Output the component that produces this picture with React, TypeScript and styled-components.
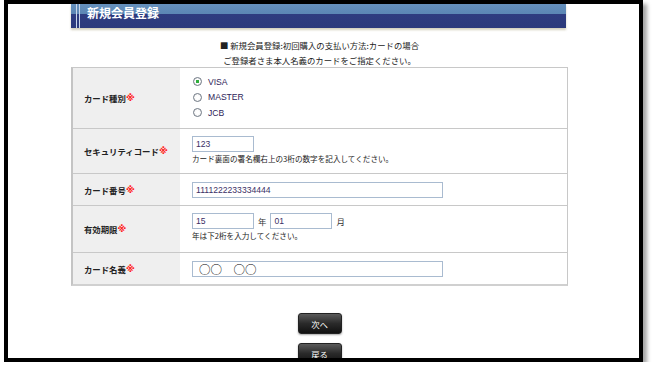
import React from 'react';
import styled, { createGlobalStyle } from 'styled-components';

const GlobalStyle = createGlobalStyle`
  body {
    margin: 0;
    background: #ffffff;
    font-family: "Noto Sans CJK JP", "Liberation Sans", sans-serif;
    color: #333333;
  }
`;

const Frame = styled.div`
  box-sizing: border-box;
  margin-left: 4px;
  width: 639px;
  height: 362px;
  border: 4px solid #000000;
  background: #ffffff;
  box-shadow: 4px 4px 4px rgba(0, 0, 0, 0.35);
  overflow: hidden;
`;

const Column = styled.div`
  margin-left: 63px;
  width: 497px;
  display: flex;
  flex-direction: column;
`;

const Header = styled.div`
  position: relative;
  box-sizing: border-box;
  width: 495px;
  height: 24px;
  padding: 2px 0 0 16px;
  background: linear-gradient(#6590bd 0, #5b86b4 42%, #2e3c80 42%, #2c3a7c 100%);
  box-shadow: 0 2px 2px rgba(160, 150, 110, 0.45);
  color: #ffffff;
  font-weight: bold;
  font-size: 12px;
  line-height: 14px;
  &::before {
    content: '';
    position: absolute;
    left: 5px;
    top: 0;
    bottom: 0;
    width: 2px;
    border-left: 1px solid #c9d6ea;
    border-right: 1px solid #c9d6ea;
  }
`;

const Intro = styled.p<{ $h: number; $top?: number }>`
  margin: ${(p) => p.$top ?? 0}px 0 0;
  height: ${(p) => p.$h}px;
  line-height: ${(p) => p.$h}px;
  text-align: center;
  font-size: 8.4px;
  color: #222222;
`;

const Table = styled.div`
  box-sizing: border-box;
  width: 497px;
  border: 1px solid #c8c8c8;
  border-left: 2px solid #c4c4c4;
  border-bottom: 2px solid #d0d0d0;
`;

const Row = styled.div<{ $h: number }>`
  display: grid;
  grid-template-columns: 107px 1fr;
  height: ${(p) => p.$h}px;
  box-sizing: border-box;
  border-top: 1px solid #c8c8c8;
  &:first-child {
    border-top: none;
  }
`;

const Label = styled.div`
  display: flex;
  align-items: center;
  padding-left: 11px;
  background: #efefef;
  font-size: 8.4px;
  font-weight: bold;
  color: #222222;
`;

const Req = styled.span`
  color: #ff1a1a;
  font-family: "DejaVu Sans", "Noto Sans CJK JP", sans-serif;
  font-weight: bold;
  font-size: 9px;
`;

const Value = styled.div<{ $center?: boolean; $top?: number }>`
  display: flex;
  flex-direction: column;
  justify-content: ${(p) => (p.$center ? 'center' : 'flex-start')};
  padding: ${(p) => p.$top ?? 0}px 0 0 12px;
`;

const RadioLine = styled.label`
  display: flex;
  align-items: center;
  height: 15.5px;
  font-family: "Liberation Sans", "DejaVu Sans", sans-serif;
  font-size: 8.6px;
  color: #2e2458;
`;

const RadioDot = styled.span<{ $checked?: boolean }>`
  box-sizing: border-box;
  width: 9px;
  height: 9px;
  margin: 0 6px 0 1px;
  border-radius: 50%;
  border: 1px solid #6f7884;
  background: radial-gradient(circle, ${(p) => (p.$checked ? '#2fae3c 0 1.6px,' : '')} #ffffff 1.7px, #e8e8e8 100%);
`;

const Field = styled.div`
  display: flex;
  align-items: center;
  gap: 4px;
  font-size: 8.4px;
`;

const Input = styled.div<{ $w: number; $big?: boolean }>`
  box-sizing: border-box;
  width: ${(p) => p.$w}px;
  height: 16px;
  padding-left: ${(p) => (p.$big ? 6 : 3)}px;
  border: 1px solid #a9bbd0;
  background: #ffffff;
  font-family: ${(p) => (p.$big ? '"Noto Sans CJK JP", sans-serif' : '"Liberation Sans", sans-serif')};
  font-size: ${(p) => (p.$big ? 11.5 : 8.6)}px;
  line-height: 14px;
  color: ${(p) => (p.$big ? '#000000' : '#3b2f66')};
  white-space: pre;
`;

const Help = styled.div`
  height: 13px;
  line-height: 13px;
  font-size: 7.6px;
  color: #222222;
`;

const Buttons = styled.div`
  display: flex;
  flex-direction: column;
  align-items: center;
  gap: 9px;
  margin-top: 27px;
`;

const Button = styled.button`
  width: 44px;
  height: 21px;
  padding: 0;
  border: 1px solid #222222;
  border-radius: 3px;
  background: linear-gradient(#5a5a5a, #2a2a2a 50%, #111111);
  box-shadow: 0 1px 2px rgba(0, 0, 0, 0.35);
  color: #ffffff;
  font-family: "Noto Sans CJK JP", sans-serif;
  font-size: 8.4px;
`;

export default function App() {
  return (
    <>
      <GlobalStyle />
      <Frame>
        <Column>
          <Header>新規会員登録</Header>
          <Intro $h={16} $top={9}>
            ■ 新規会員登録:初回購入の支払い方法:カードの場合
          </Intro>
          <Intro $h={14}>ご登録者さま本人名義のカードをご指定ください。</Intro>
          <Table>
            <Row $h={60}>
              <Label>
                カード種別<Req>※</Req>
              </Label>
              <Value $top={6}>
                <RadioLine>
                  <RadioDot $checked />
                  VISA
                </RadioLine>
                <RadioLine>
                  <RadioDot />
                  MASTER
                </RadioLine>
                <RadioLine>
                  <RadioDot />
                  JCB
                </RadioLine>
              </Value>
            </Row>
            <Row $h={45}>
              <Label>
                セキュリティコード<Req>※</Req>
              </Label>
              <Value $top={7}>
                <Input $w={62}>123</Input>
                <Help>カード裏面の署名欄右上の3桁の数字を記入してください。</Help>
              </Value>
            </Row>
            <Row $h={32}>
              <Label>
                カード番号<Req>※</Req>
              </Label>
              <Value $center>
                <Input $w={251}>1111222233334444</Input>
              </Value>
            </Row>
            <Row $h={47}>
              <Label>
                有効期限<Req>※</Req>
              </Label>
              <Value $top={7}>
                <Field>
                  <Input $w={62}>15</Input>
                  <span>年</span>
                  <Input $w={62}>01</Input>
                  <span>月</span>
                </Field>
                <Help>年は下2桁を入力してください。</Help>
              </Value>
            </Row>
            <Row $h={32}>
              <Label>
                カード名義<Req>※</Req>
              </Label>
              <Value $center>
                <Input $w={251} $big>
                  ○○　○○
                </Input>
              </Value>
            </Row>
          </Table>
          <Buttons>
            <Button>次へ</Button>
            <Button>戻る</Button>
          </Buttons>
        </Column>
      </Frame>
    </>
  );
}
